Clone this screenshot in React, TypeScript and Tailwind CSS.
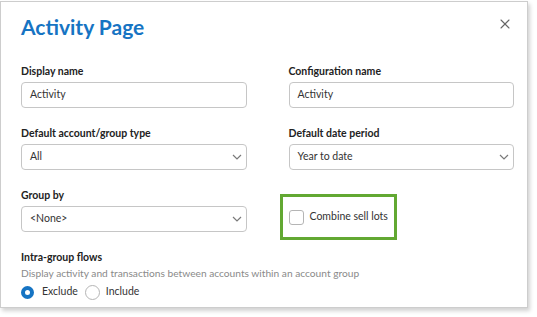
import { X } from "lucide-react";

function Chevron() {
    return (
        <svg width="10" height="6" viewBox="0 0 10 6" className="shrink-0">
            <polyline points="1,1 5,5 9,1" fill="none" stroke="#7a7a7a" strokeWidth="1.2" />
        </svg>
    );
}

function Field(props: { label: string; value: string; select?: boolean }) {
    return (
        <div className="flex flex-col">
            <span className="h-4 leading-4 text-[10.5px] font-bold text-[#222]">{props.label}</span>
            <div className="mt-[3px] h-[26px] flex items-center justify-between border border-[#c6c6c6] rounded-[4px] pl-2 pr-[4px] text-[10.5px] text-[#333]">
                <span>{props.value}</span>
                {props.select && <Chevron />}
            </div>
        </div>
    );
}

export default function App() {
    return (
        <div className="w-[537px] h-[317px] bg-white font-['Lato',sans-serif]">
            <div className="mt-px w-[528px] h-[307px] bg-white border border-[#cdcdcd] shadow-[2px_3px_4px_rgba(0,0,0,0.18)] pl-5 pr-[13px] pt-3">
                <div className="flex justify-between items-start">
                    <span className="text-[21px] leading-[26px] font-bold text-[#1674c3]">Activity Page</span>
                    <X size={16} strokeWidth={1.6} className="mt-[2px] mr-[1px] text-[#666]" />
                </div>
                <div className="mt-[23px] grid grid-cols-2 gap-x-[42px] gap-y-[17px]">
                    <Field label="Display name" value="Activity" />
                    <Field label="Configuration name" value="Activity" />
                    <Field label="Default account/group type" value="All" select />
                    <Field label="Default date period" value="Year to date" select />
                    <Field label="Group by" value="<None>" select />
                    <div className="-ml-[9px] mt-[7px] w-[117px] h-[46px] border-[3px] border-[#62a832] flex items-center pl-[6px] gap-[6px]">
                        <span className="shrink-0 w-[15px] h-[15px] rounded-[3px] border border-[#b5b5b5] bg-white" />
                        <span className="whitespace-nowrap text-[10.5px] text-[#333]">Combine sell lots</span>
                    </div>
                </div>
                <div className="mt-[9px] flex flex-col">
                    <span className="h-4 leading-4 text-[10.5px] font-bold text-[#222]">Intra-group flows</span>
                    <span className="h-4 leading-4 text-[10.2px] text-[#8a8a8a]">
                        Display activity and transactions between accounts within an account group
                    </span>
                    <div className="mt-[3px] h-4 flex items-center text-[10.5px] text-[#333]">
                        <span className="w-[13px] h-[13px] rounded-full border-[4px] border-[#1674c3] bg-white" />
                        <span className="ml-[8px]">Exclude</span>
                        <span className="ml-[7px] w-[15px] h-[15px] rounded-full border border-[#b5b5b5] bg-white" />
                        <span className="ml-[6px]">Include</span>
                    </div>
                </div>
            </div>
        </div>
    );
}
